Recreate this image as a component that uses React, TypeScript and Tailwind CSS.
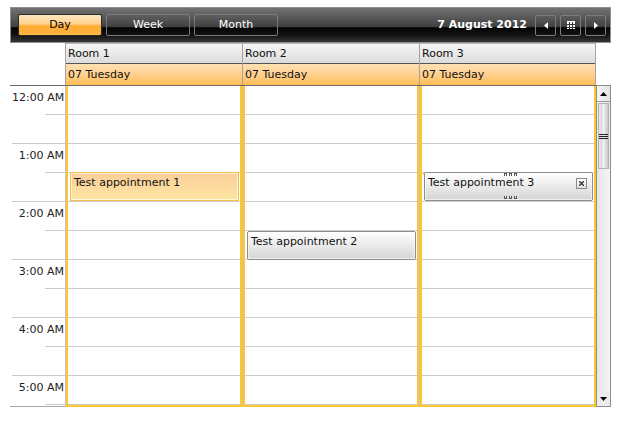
import React from "react";

function Handle({ flip }: { flip?: boolean }) {
  return (
    <svg width="13" height="4" viewBox="0 0 13 4" className="block">
      {[0, 5, 10].map((x) =>
        flip ? (
          <g key={x} fill="#555">
            <rect x={x} y={3} width={3} height={1} />
            <rect x={x + 2} y={1} width={1} height={2} />
            <rect x={x} y={1} width={1} height={2} />
          </g>
        ) : (
          <g key={x} fill="#555">
            <rect x={x} y={0} width={3} height={1} />
            <rect x={x + 2} y={1} width={1} height={2} />
            <rect x={x} y={1} width={1} height={2} />
          </g>
        )
      )}
    </svg>
  );
}

function NavButton({ children }: { children: React.ReactNode }) {
  return (
    <div className="w-[21px] h-[21px] border border-[#7c7c7c] rounded-[2px] flex items-center justify-center">
      {children}
    </div>
  );
}

function Toolbar() {
  return (
    <div className="w-[601px] h-[36px] border border-[#8f8f8f] bg-[linear-gradient(to_bottom,#727272_0%,#404040_55%,#030303_58%,#141414_80%,#353535_100%)] flex items-center pl-[7px] pr-[4px]">
      <div className="w-[84px] h-[22px] border border-[#2a2a2a] rounded-[2px] bg-[linear-gradient(to_bottom,#ffe7c2_0%,#ffd08a_45%,#ffab30_55%,#ffb443_100%)] flex items-center justify-center text-black">
        Day
      </div>
      <div className="ml-[4px] w-[84px] h-[22px] border border-[#7a7a7a] rounded-[2px] flex items-center justify-center text-white">
        Week
      </div>
      <div className="ml-[4px] w-[84px] h-[22px] border border-[#7a7a7a] rounded-[2px] flex items-center justify-center text-white">
        Month
      </div>
      <div className="flex-1" />
      <div className="font-bold text-white mr-[8px]">7 August 2012</div>
      <div className="flex gap-[4px]">
        <NavButton>
          <svg width="4" height="7" viewBox="0 0 4 7">
            <path d="M4 0 L0 3.5 L4 7 Z" fill="#fff" />
          </svg>
        </NavButton>
        <NavButton>
          <svg width="8" height="8" viewBox="0 0 8 8">
            <rect x="0" y="0" width="8" height="8" fill="#fff" />
            <rect x="2" y="1" width="1" height="7" fill="#333" />
            <rect x="5" y="1" width="1" height="7" fill="#333" />
            <rect x="0" y="3" width="8" height="1" fill="#333" />
            <rect x="0" y="6" width="8" height="1" fill="#333" />
          </svg>
        </NavButton>
        <NavButton>
          <svg width="4" height="7" viewBox="0 0 4 7">
            <path d="M0 0 L4 3.5 L0 7 Z" fill="#fff" />
          </svg>
        </NavButton>
      </div>
    </div>
  );
}

const rooms = ["Room 1", "Room 2", "Room 3"];
const hours = ["12:00 AM", "1:00 AM", "2:00 AM", "3:00 AM", "4:00 AM", "5:00 AM"];

function Header() {
  return (
    <div className="ml-[55px] w-[531px] flex">
      {rooms.map((r, i) => (
        <div
          key={r}
          className={`w-[177px] flex flex-col border-l border-[#a3a3a3] ${i === 2 ? "border-r" : ""}`}
        >
          <div className="h-[21px] border-t border-t-[#b8b8b8] border-b border-b-[#555] bg-[linear-gradient(to_bottom,#f6f6f6,#dcdcdc)] pl-[2px] pt-[2px] flex items-center text-[#111]">
            {r}
          </div>
          <div className="h-[21px] bg-[linear-gradient(to_bottom,#ffe0b4_0%,#ffd08e_50%,#ffbd55_100%)] pl-[2px] pt-[2px] flex items-center text-[#111]">
            07 Tuesday
          </div>
        </div>
      ))}
    </div>
  );
}

function Gutter() {
  return (
    <div className="w-[55px] h-[321px] border-b border-[#a8a8a8] overflow-hidden pl-[2px]">
      {hours.map((h) => (
        <div key={h} className="h-[58px] flex flex-col">
          <div className="h-[29px] flex flex-col">
            <div className="flex-1 text-right pr-[1px] pt-[5px] text-[#222] leading-[13px] whitespace-nowrap">{h}</div>
            <div className="h-px ml-[33px] bg-[#cacaca]" />
          </div>
          <div className="h-[29px] border-b border-[#cacaca]" />
        </div>
      ))}
    </div>
  );
}

function Appointment({
  title,
  top,
  variant,
}: {
  title: string;
  top: number;
  variant: "orange" | "gray" | "selected";
}) {
  const cls =
    variant === "orange"
      ? "border-[#f2c24c] bg-[linear-gradient(to_bottom,#fcce9a,#fde6a2)]"
      : "border-[#8d8d8d] bg-[linear-gradient(to_bottom,#ffffff,#d5d5d5)] rounded-[2px]";
  return (
    <div
      className={`absolute left-[2px] w-[169px] h-[29px] border ${cls}`}
      style={{ top }}
    >
      <div className="w-full h-full border border-white/60 pl-[2px] pt-[2px] leading-[13px] text-[#111]">
        {title}
      </div>
      {variant === "selected" && (
        <>
          <div className="absolute left-[79px] top-[0px]">
            <Handle />
          </div>
          <div className="absolute left-[79px] top-[22px]">
            <Handle flip />
          </div>
          <div className="absolute left-[151px] top-[5px] w-[11px] h-[11px] border border-[#8a8a8a] bg-[linear-gradient(to_bottom,#ffffff,#dedede)] flex items-center justify-center">
            <svg width="5" height="5" viewBox="0 0 5 5">
              <path d="M0 0 L5 5 M5 0 L0 5" stroke="#333" strokeWidth="1.3" />
            </svg>
          </div>
          <div className="absolute -left-[2px] -top-[1px] w-px h-[3px] bg-[#fdc731]" />
        </>
      )}
    </div>
  );
}

function Column({ index }: { index: number }) {
  return (
    <div className="w-[177px] h-[321px] border-l border-[#c4c4c4]">
      <div className="h-full border-2 border-t-0 border-[#fec62e] relative overflow-hidden">
        {Array.from({ length: 11 }).map((_, i) => (
          <div key={i} className="h-[29px] border-b border-[#cdcdcd]" />
        ))}
        {index === 0 && <Appointment title="Test appointment 1" top={86} variant="orange" />}
        {index === 1 && <Appointment title="Test appointment 2" top={145} variant="gray" />}
        {index === 2 && <Appointment title="Test appointment 3" top={86} variant="selected" />}
      </div>
    </div>
  );
}

function Scrollbar() {
  return (
    <div className="w-[15px] h-[322px] border border-[#8e8e8e] bg-[#ececec] flex flex-col">
      <div className="h-[16px] border-b border-[#9a9a9a] bg-[linear-gradient(to_right,#f6f6f6,#e2e2e2)] flex items-center justify-center">
        <svg width="7" height="4" viewBox="0 0 7 4">
          <path d="M0 4 L3.5 0 L7 4 Z" fill="#000" />
        </svg>
      </div>
      <div className="mt-[1px] mx-[1px] h-[66px] border border-[#b4b4b4] bg-[linear-gradient(to_right,#e8e8e8,#dadada_30%,#f2f2f2_50%,#c6c6c6_100%)] flex items-center justify-center">
        <div className="flex flex-col gap-[1px]">
          <div className="w-[9px] h-px bg-[#222]" />
          <div className="w-[9px] h-px bg-[#222]" />
          <div className="w-[9px] h-px bg-[#222]" />
        </div>
      </div>
      <div className="flex-1 bg-[linear-gradient(to_right,#e6e6e6,#f4f4f4)]" />
      <div className="h-[14px] flex items-center justify-center">
        <svg width="7" height="4" viewBox="0 0 7 4">
          <path d="M0 0 L3.5 4 L7 0 Z" fill="#000" />
        </svg>
      </div>
    </div>
  );
}

export default function App() {
  return (
    <div className="w-[622px] h-[422px] bg-white pt-[7px] pl-[10px] overflow-hidden font-['DejaVu_Sans',Verdana,sans-serif] text-[11px] text-black">
      <Toolbar />
      <Header />
      <div className="flex">
        <div className="flex border-t border-[#6a6a6a]">
          <Gutter />
          {rooms.map((r, i) => (
            <Column key={r} index={i} />
          ))}
        </div>
        <Scrollbar />
      </div>
    </div>
  );
}
